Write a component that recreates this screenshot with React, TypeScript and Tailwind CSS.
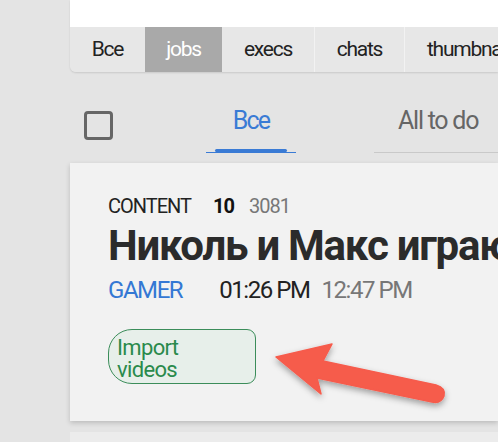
import React from "react";

export default function App() {
  const font = { fontFamily: "Roboto, 'Noto Sans', sans-serif" };
  return (
    <div className="relative w-[498px] h-[442px] overflow-hidden bg-[#e4e4e4]" style={font}>
      <div className="pl-[70px]">
        {/* top panel */}
        <div className="rounded-bl-[6px] shadow-[0_1px_2px_rgba(0,0,0,0.12)] overflow-hidden">
          <div className="h-[27px] bg-white" />
          <div className="h-[45px] bg-[#e7e7e7] flex items-stretch text-[21px] text-[#222] tracking-[-0.06em] whitespace-nowrap">
            <div className="shrink-0 w-[75px] flex items-center justify-center">Все</div>
            <div className="shrink-0 w-[77px] flex items-center justify-center bg-[#a9a9a9] text-white">jobs</div>
            <div className="shrink-0 w-[92px] flex items-center justify-center">execs</div>
            <div className="shrink-0 w-[90px] flex items-center justify-center border-l border-[#f2f2f2]">chats</div>
            <div className="shrink-0 flex items-center pl-[22px] pr-[20px] border-l border-[#f2f2f2]">thumbnails</div>
          </div>
        </div>

        {/* filter row */}
        <div className="h-[91px] flex items-start whitespace-nowrap">
          <div className="shrink-0 ml-[14px] mt-[39px] w-[29px] h-[29px] border-[3px] border-[#666] rounded-[4px]" />
          <div className="shrink-0 ml-[93px] mt-[35px] w-[90px] flex flex-col items-center">
            <div className="text-[25px] leading-[28px] text-[#3a7bd5] tracking-[-0.07em]">Все</div>
            <div className="mt-[14px] w-[72px] h-[3px] rounded-full bg-[#3a7bd5]" />
            <div className="w-[90px] h-[1px] bg-[#3a7bd5]" />
          </div>
          <div className="shrink-0 ml-[78px] mt-[35px] w-[150px] flex flex-col">
            <div className="pl-[24px] text-[25px] leading-[28px] text-[#666] tracking-[-0.05em]">All to do</div>
            <div className="mt-[17px] w-full h-[1px] bg-[#c9c9c9]" />
          </div>
        </div>

        {/* card */}
        <div className="h-[258px] bg-[#f2f2f2] shadow-[0_2px_5px_rgba(0,0,0,0.18)] pt-[32px] pl-[38px] whitespace-nowrap">
          <div className="flex items-baseline text-[20px] leading-[23px] tracking-[-0.05em]">
            <span className="text-[#222]">CONTENT</span>
            <span className="ml-[22px] font-bold text-[#111]">10</span>
            <span className="ml-[15px] text-[#777]">3081</span>
          </div>
          <div className="mt-[5px] text-[42px] leading-[46px] font-bold text-[#2b2b2b] tracking-[-0.03em]">
            Николь и Макс играют
          </div>
          <div className="mt-[8px] flex items-baseline text-[24px] leading-[27px] tracking-[-0.06em]">
            <span className="text-[#3478d4]">GAMER</span>
            <span className="ml-[37px] text-[#222]">01:26 PM</span>
            <span className="ml-[12px] text-[#777]">12:47 PM</span>
          </div>
          <div className="mt-[25px] w-[148px] h-[55px] border border-[#3b8d5a] bg-[#e7efea] rounded-l-[24px] rounded-r-[9px] flex items-center pl-[8px]">
            <div className="mt-[4px] text-[22px] leading-[22px] text-[#2a8a4c] tracking-[-0.03em]">
              <div>Import</div>
              <div>videos</div>
            </div>
          </div>
        </div>

        <div className="mt-[11px] h-[40px] bg-[#ececec]" />
      </div>

      {/* annotation arrow */}
      <svg className="absolute left-0 top-0 pointer-events-none" width="498" height="442" viewBox="0 0 498 442">
        <defs>
          <filter id="sh" x="-20%" y="-30%" width="140%" height="170%">
            <feDropShadow dx="0" dy="3" stdDeviation="3" floodColor="#000" floodOpacity="0.35" />
          </filter>
        </defs>
        <path
          d="M276 357 L332 344 L323 361 L436 385 Q446 388 444 396 Q441 404 432 402 L317 378 L321 394 Z"
          fill="#f65b4c"
          stroke="#f65b4c"
          strokeWidth="1.5"
          strokeLinejoin="round"
          filter="url(#sh)"
        />
      </svg>
    </div>
  );
}
